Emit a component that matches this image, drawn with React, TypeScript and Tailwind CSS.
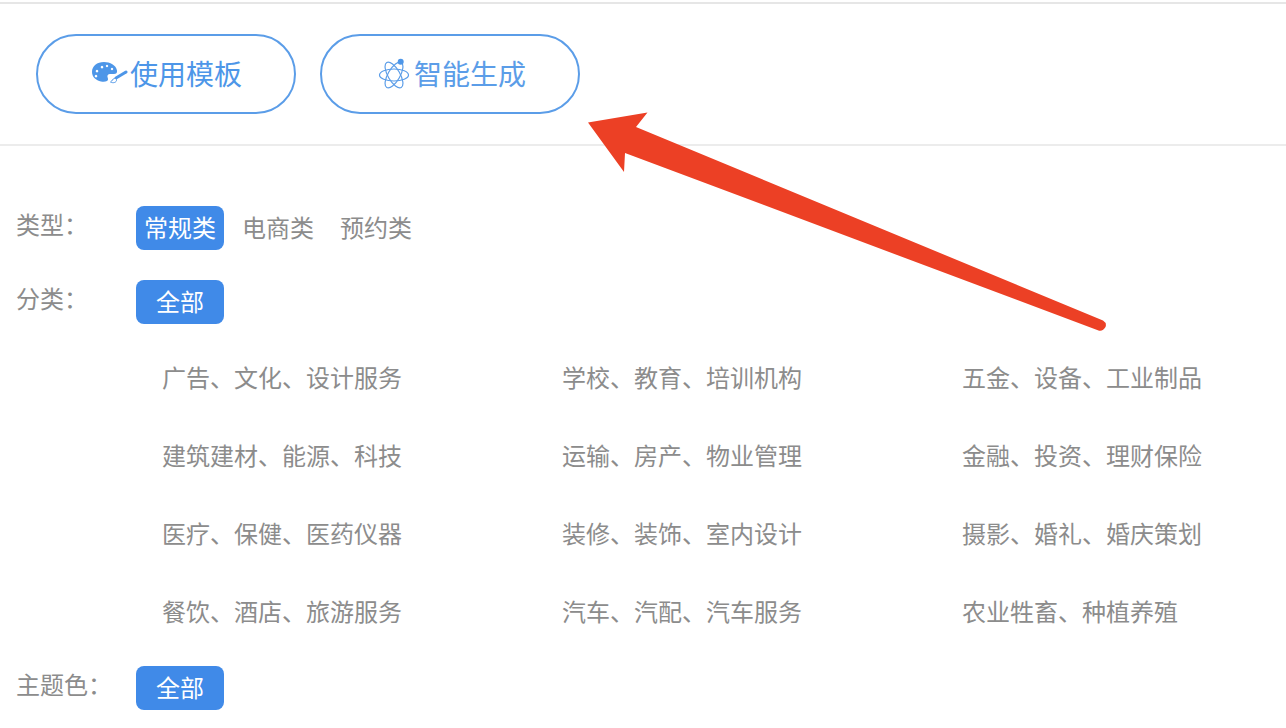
const CJK = "font-['Noto_Sans_CJK_SC','Noto_Sans',sans-serif]";

const CATEGORIES = [
  "广告、文化、设计服务", "学校、教育、培训机构", "五金、设备、工业制品",
  "建筑建材、能源、科技", "运输、房产、物业管理", "金融、投资、理财保险",
  "医疗、保健、医药仪器", "装修、装饰、室内设计", "摄影、婚礼、婚庆策划",
  "餐饮、酒店、旅游服务", "汽车、汽配、汽车服务", "农业牲畜、种植养殖",
];

function PaletteIcon() {
  return (
    <svg width="36" height="26" viewBox="0 0 36 26" className="shrink-0">
      <path
        fill="#4d96e8"
        fillRule="evenodd"
        d="M12 2c6 0 12 3 13 8.500.5 2.500-1 3.500-3 3.500h-4c-2 0-3 1.500-2.500 3 .6 1.800 1 3-.5 4-1.500.8-3.500 1-6 .5C4 20.500 0 17 0 12 0 6 5 2 12 2Z
           M10 5.800a1.300 1.300 0 1 0 .01 0Z M15 4.800a1.200 1.200 0 1 0 .01 0Z M20 7.800a1.200 1.200 0 1 0 .01 0Z M5 9.800a1.300 1.300 0 1 0 .01 0Z M4 14.800a1.300 1.300 0 1 0 .01 0Z"
      />
      <path d="M24 18 34 12" stroke="#4d96e8" strokeWidth="3" strokeLinecap="round" fill="none" />
      <path d="M22.500 18.500c-2 0-2 2.500-4 3.500 2.500 1.500 6.500.5 6-2.500-.2-.8-1-1-2-1Z" stroke="#4d96e8" strokeWidth="1" fill="#fff" />
    </svg>
  );
}

function AtomIcon() {
  return (
    <svg width="32" height="32" viewBox="0 0 32 32" className="shrink-0" fill="none" stroke="#5b9de8" strokeWidth="1.200">
      <ellipse cx="16" cy="18" rx="14.500" ry="6" />
      <ellipse cx="16" cy="18" rx="14.500" ry="6" transform="rotate(60 16 18)" />
      <ellipse cx="16" cy="18" rx="14.500" ry="6" transform="rotate(120 16 18)" />
      <circle cx="22.700" cy="4.700" r="3" fill="#4d96e8" stroke="none" />
    </svg>
  );
}

function Pill({ children }: { children: string }) {
  return (
    <span className="flex h-11 w-[88px] items-center justify-center rounded-lg bg-[#408ae8] pb-[2px] text-2xl text-white">
      {children}
    </span>
  );
}

function Label({ children }: { children: string }) {
  return <div className="w-[136px] pl-4 text-2xl leading-[36px] text-[#8c8c8c]">{children}</div>;
}

export default function App() {
  return (
    <div className={`relative h-[728px] w-[1286px] overflow-hidden bg-white ${CJK}`}>
      <div className="mt-[2px] h-[2px] bg-[#e6e6e6]" />

      <div className="flex h-[142px] gap-6 border-b-2 border-[#ececec] pl-9 pt-[30px]">
        <button className="flex h-20 w-[260px] items-center rounded-full border-2 border-[#5b9de8] pb-[2px] pl-[54px] text-[28px] text-[#4d96e8]">
          <PaletteIcon />
          <span className="ml-[2px]">使用模板</span>
        </button>
        <button className="flex h-20 w-[260px] items-center rounded-full border-2 border-[#5b9de8] pb-[2px] pl-[56px] text-[28px] text-[#5b9de8]">
          <AtomIcon />
          <span className="ml-[4px]">智能生成</span>
        </button>
      </div>

      <div className="flex pt-[60px]">
        <Label>类型：</Label>
        <div className="flex items-center text-2xl text-[#8c8c8c]">
          <Pill>常规类</Pill>
          <span className="ml-[18px] pb-[2px]">电商类</span>
          <span className="ml-[26px] pb-[2px]">预约类</span>
        </div>
      </div>

      <div className="flex pt-[30px]">
        <Label>分类：</Label>
        <Pill>全部</Pill>
      </div>

      <div className="grid grid-cols-[400px_400px_400px] pl-[162px] pt-[14px] text-2xl text-[#8c8c8c]">
        {CATEGORIES.map(c => (
          <div key={c} className="flex h-[78px] items-center">{c}</div>
        ))}
      </div>

      <div className="flex pt-[16px]">
        <Label>主题色：</Label>
        <Pill>全部</Pill>
      </div>

      <svg width="1286" height="728" className="pointer-events-none absolute left-0 top-0">
        <path
          fill="#ec4025"
          d="M588 122.500 647.500 112.500 636 127 1103 320.500Q1107 323 1105.500 327 1103 331.500 1098.500 330.500L625 153 624 172Z"
        />
      </svg>
    </div>
  );
}
